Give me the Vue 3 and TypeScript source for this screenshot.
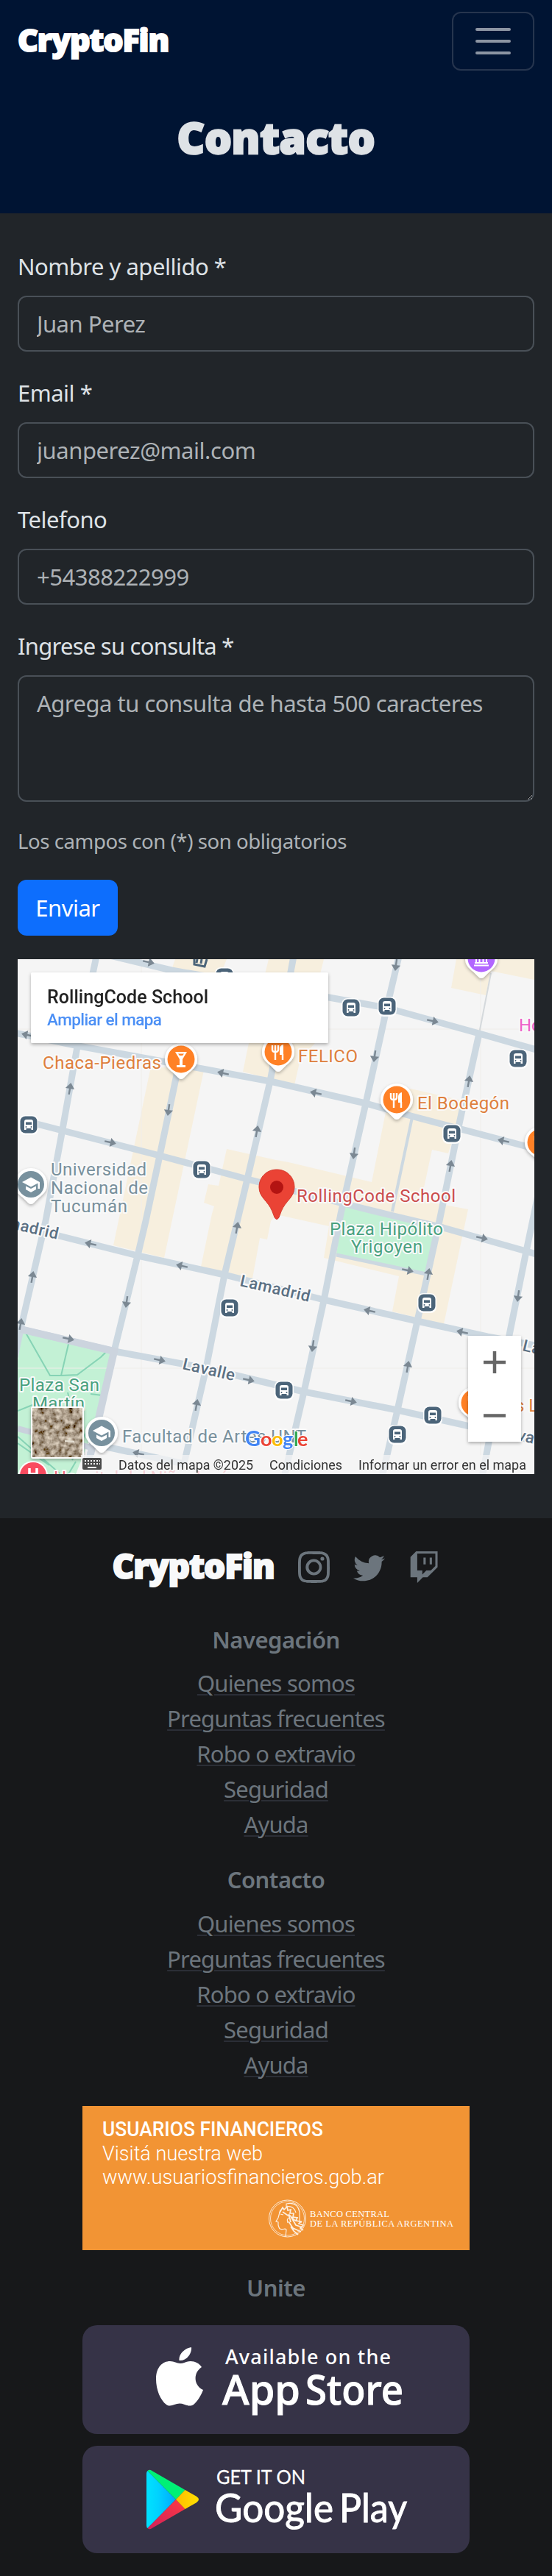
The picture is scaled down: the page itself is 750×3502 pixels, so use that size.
<script setup lang="ts">
interface Field { id: string; label: string; placeholder: string; type: string }
interface Spot { x: number; y: number }
interface Arrow extends Spot { a: number }

const fields: Field[] = [
  { id: 'nombre', label: 'Nombre y apellido *', placeholder: 'Juan Perez', type: 'text' },
  { id: 'email', label: 'Email *', placeholder: 'juanperez@mail.com', type: 'email' },
  { id: 'telefono', label: 'Telefono', placeholder: '+54388222999', type: 'tel' },
]

const links: string[] = ['Quienes somos', 'Preguntas frecuentes', 'Robo o extravio', 'Seguridad', 'Ayuda']
const groups: string[] = ['Navegación', 'Contacto']

const blocks: string[] = [
  '205,160 277,165 223,420 154,403',
  '238,14 308,14 300,34 233,28',
  '365,14 440,14 435,34 360,34',
  '338,128 428,128 408,150 400,185 330,167',
  '308,272 375,287 392,290 505,317 523,227 530,200 558,190 632,207 609,278 587,273 577,320 572,342 636,354 603,510 533,493 542,445 440,420 447,377 375,361 368,370 363,395 353,393 343,448 273,432 288,360 291,350 277,345 283,320 297,322',
  '620,14 726,14 726,42 667,30 660,63 613,53',
]

const roads: string[] = [
  '131,10 105,133 85,245 62,370 28,517 20,555',
  '243,157 217,281 198,370 187,417 155,547 127,667 120,700',
  '399,10 367,180 336,313 305,443 280,570 250,700',
  '542,10 526,78 497,210 463,360 440,478 413,602 386,718',
  '651,115 625,233 597,370 567,506 540,627 519,718',
  '732,330 715,411 692,525 655,718',
  '145,8 233,29 447,66 525,80 651,115 732,138',
  '20,114 107,132 243,157 367,180 497,210 562,228 732,273',
  '50,238 85,247 217,281 336,313 462,345 535,363 602,379 715,411 732,416',
  '24,378 80,390 187,417 305,443 440,477 567,506 662,527 732,540',
  '28,517 155,547 280,570 413,602 540,627 732,670',
  '140,676 250,700',
]

const arrows: Arrow[] = [
  ...[[202, 18], [150, 263], [588, 98], [93, 530], [217, 559], [338, 586], [655, 393], [554, 437], [477, 615]].map(([x, y]) => ({ x, y, a: 12 })),
  ...[[37, 117], [303, 169], [429, 196], [684, 261], [123, 401], [247, 431], [502, 492], [628, 521], [188, 686]].map(([x, y]) => ({ x, y, a: 192 })),
  ...[[95, 190], [349, 248], [637, 180], [612, 295], [322, 379], [44, 446], [28, 510], [267, 620], [582, 442], [554, 568]].map(([x, y]) => ({ x, y, a: -80 })),
  ...[[229, 219], [538, 22], [509, 146], [481, 278], [172, 480], [425, 540], [704, 472]].map(([x, y]) => ({ x, y, a: 98 })),
]

const buses: Spot[] = [
  [39, 239], [274, 300], [477, 80], [526, 78], [704, 149], [614, 251],
  [312, 488], [580, 481], [386, 600], [588, 634], [540, 660], [305, 38],
].map(([x, y]) => ({ x, y }))

const food: Spot[] = [{ x: 378, y: 140 }, { x: 539, y: 205 }, { x: 735, y: 263 }, { x: 645, y: 617 }]
const campus: Spot[] = [{ x: 42, y: 320 }, { x: 138, y: 658 }]
const at = (s: Spot): string => `translate(${s.x} ${s.y})`
</script>

<template>
  <div class="page">
    <header class="hero">
      <nav class="navbar">
        <a class="brand">CryptoFin</a>
        <button class="toggler" type="button" aria-label="Menu">
          <svg viewBox="0 0 30 30" width="60" height="60">
            <path d="M4 7h22M4 15h22M4 23h22" stroke="#fff" stroke-opacity=".55" stroke-width="2" stroke-linecap="round" />
          </svg>
        </button>
      </nav>
      <h1 class="title">Contacto</h1>
    </header>

    <main class="content">
      <form class="form">
        <div v-for="f in fields" :key="f.id" class="field">
          <label :for="f.id">{{ f.label }}</label>
          <input :id="f.id" :type="f.type" :placeholder="f.placeholder" :class="f.id">
        </div>
        <div class="field">
          <label for="consulta" class="tight">Ingrese su consulta *</label>
          <textarea id="consulta" class="consulta" placeholder="Agrega tu consulta de hasta 500 caracteres"></textarea>
        </div>
        <p class="hint">Los campos con (*) son obligatorios</p>
        <button class="send" type="button">Enviar</button>
      </form>

      <svg class="map" viewBox="24 14 702 700" width="702" height="700">
        <defs>
          <filter id="aerial" x="0" y="0" width="100%" height="100%">
            <feTurbulence type="fractalNoise" baseFrequency=".13" numOctaves="3" seed="8" />
            <feColorMatrix values="1.500 .2 0 0 -.27  1.450 .2 0 0 -.31  1.350 .2 0 0 -.34  0 0 0 0 1" />
            <feComponentTransfer>
              <feFuncR type="linear" slope=".8" intercept="-.06" />
              <feFuncG type="linear" slope=".78" intercept="-.07" />
              <feFuncB type="linear" slope=".74" intercept="-.07" />
            </feComponentTransfer>
          </filter>
          <filter id="soft" x="-20%" y="-20%" width="140%" height="150%">
            <feDropShadow dx="0" dy="2" stdDeviation="2" flood-color="#000" flood-opacity=".3" />
          </filter>
          <g id="bus">
            <rect x="-13" y="-13" width="26" height="27" rx="8" fill="#fff" opacity=".9" />
            <rect x="-11.500" y="-11.500" width="23" height="23" rx="7" fill="#4b6479" />
            <path d="M-6 7v-11q0-3 3-3h6q3 0 3 3v11h-2.500v-2h-7v2z" fill="#fff" />
            <path d="M-4-3.500h8v3.500h-8z" fill="#4b6479" />
            <circle cx="-3.500" cy="3" r="1" fill="#4b6479" /><circle cx="3.500" cy="3" r="1" fill="#4b6479" />
          </g>
          <path id="drop" d="M0-22a22 22 0 0 1 22 22c0 9-5 13-11 18l-7 7q-4 4-8 0l-7-7c-6-5-11-9-11-18a22 22 0 0 1 22-22z" />
          <path id="arrow" d="M-8-1.200h8v-5l8 6.200-8 6.200v-5h-8z" />
        </defs>

        <rect x="24" y="14" width="702" height="700" fill="#f5f5f5" />
        <polygon v-for="b in blocks" :key="b" :points="b" fill="#f7efde" />
        <polygon points="467,350 592,378 578,440 457,415" fill="#c3f1d5" />
        <polygon points="30,521 152,548 128,650 103,714 24,714 24,560" fill="#c3f1d5" />
        <path d="M192 14v700M653 14v700M24 570h702M24 109h702" stroke="#efedea" fill="none" />
        <path d="M35 522l33 58h15l11-47M83 580l22-1 32-24 9-9M24 628l20-8M123 605l16 2M24 663l57 50M24 672l43 30M103 697l-10 17M92 603l3 12M118 655l-20 40" stroke="#86d3b5" stroke-width="2" fill="none" />
        <path d="M24 652l100 26" stroke="#c9d1dc" stroke-width="8" />
        <path d="M667 33l-16 82" stroke="#d5d9dc" stroke-width="2" />
        <path d="M560 229l-27 128" stroke="#ccd8e1" stroke-width="4" />
        <path d="M457 416l122 26" stroke="#ccd8e1" stroke-width="5" />
        <polyline v-for="r in roads" :key="r" :points="r" fill="none" stroke="#ccd8e1" stroke-width="9" stroke-linejoin="round" />
        <path d="M28 517l127 30-32 140" stroke="#ccd4de" stroke-width="10" fill="none" />
        <use v-for="(r, i) in arrows" :key="i" href="#arrow" :transform="`translate(${r.x} ${r.y}) rotate(${r.a})`" fill="#7b8893" />
        <path d="M264 14v7l14 3 3-10M268 14l-1 5M274 14l-1 6" stroke="#4b6479" stroke-width="3" fill="none" />
        <use v-for="(b, i) in buses" :key="i" href="#bus" :transform="at(b)" />

        <g class="poi">
          <g class="road-name">
            <text transform="translate(325 458) rotate(13)" textLength="97">Lamadrid</text>
            <text transform="translate(-17 373) rotate(13)" textLength="97">Lamadrid</text>
            <text transform="translate(247 571) rotate(13)" textLength="72">Lavalle</text>
            <text transform="translate(709 546) rotate(13)" textLength="97">Lamadrid</text>
            <text transform="translate(678 662) rotate(13)" textLength="72">Lavalle</text>
          </g>
          <g fill="#de7f3d">
            <text x="58" y="163" textLength="161">Chaca-Piedras</text>
            <text x="405" y="154" textLength="81">FELICO</text>
            <text x="567" y="218" textLength="125">El Bodegón</text>
            <text x="700" y="629">s Lomitas</text>
          </g>
          <text x="705" y="112" fill="#ee60c8">Hotel</text>
          <g fill="#78909c">
            <text x="69" y="308" textLength="130">Universidad</text>
            <text x="69" y="333" textLength="132">Nacional de</text>
            <text x="69" y="358" textLength="104">Tucumán</text>
            <text x="166" y="671" textLength="250">Facultad de Artes UNT</text>
          </g>
          <g fill="#48a17f">
            <text x="448" y="389" textLength="154">Plaza Hipólito</text>
            <text x="477" y="413" textLength="97">Yrigoyen</text>
            <text x="26" y="601" textLength="109">Plaza San</text>
            <text x="44" y="626" textLength="71">Martín</text>
          </g>
          <text x="403" y="344" textLength="216" fill="#cb4d4d">RollingCode School</text>
          <text x="73" y="727" textLength="250" fill="#ee6b7b">Hospital del Niño Jesús</text>
        </g>

        <g filter="url(#soft)">
          <use href="#drop" transform="translate(246 150)" fill="#fff" />
          <use v-for="(f, i) in food" :key="i" href="#drop" :transform="at(f)" fill="#fff" />
          <use v-for="(c, i) in campus" :key="'c' + i" href="#drop" :transform="at(c)" fill="#fff" />
          <use href="#drop" transform="translate(654 13)" fill="#fff" />
        </g>
        <g transform="translate(246 150)">
          <circle r="18.500" fill="#ff8126" />
          <path d="M-8-10h16L2 0v8h4v3H-6V8h4V0zM-4-7.500h8l-2 2.500h-4z" fill="#fff" fill-rule="evenodd" />
        </g>
        <g v-for="(f, i) in food" :key="'f' + i" :transform="at(f)">
          <circle r="18.500" fill="#ff8126" />
          <path d="M-8-9v6q0 3 4 3v11M0-9v6q0 3-4 3M-4-9v9M6 11v-8" fill="none" stroke="#fff" stroke-width="2.400" />
          <path d="M7-10v14H2V-4q0-5 5-6z" fill="#fff" />
        </g>
        <g v-for="(c, i) in campus" :key="'g' + i" :transform="at(c)">
          <circle r="18" fill="#78919e" />
          <path d="M-12-3 0-9.500 12-3v9h-2.500v-7.500L0 3.500zM-7 2.500 0 6l7-3.500v4.500L0 11-7 7z" fill="#fff" />
        </g>
        <g transform="translate(654 13)">
          <circle r="18.500" fill="#b266ff" />
          <path d="M-10 9.500h20M-9 6h18M-7-5V6M-2.500-5V6M2.500-5V6M7-5V6" stroke="#fff" stroke-width="2" />
        </g>
        <g transform="translate(45 716)">
          <circle r="20" fill="#fff" /><circle r="18" fill="#f94b5f" />
          <path d="M-5-10V8M5-10V8M-5-2H5" stroke="#fff" stroke-width="3.500" />
        </g>
        <path d="M376 300c14 0 24 10.500 24 24 0 14-12 18-18 33l-3 8q-3 5-6 0l-3-8c-6-15-18-19-18-33C352 310.500 362 300 376 300z" fill="#ea4335" stroke="#d23a2e" />
        <circle cx="376" cy="324" r="9" fill="#b31412" />

        <g filter="url(#soft)"><rect x="42" y="32" width="404" height="96" rx="2" fill="#fff" /></g>
        <g font-family="Roboto, sans-serif" font-weight="500">
          <text x="64" y="74" font-size="25" textLength="219" fill="#222">RollingCode School</text>
          <text x="64" y="104" font-size="22.500" textLength="156" fill="#4b8ff5">Ampliar el mapa</text>
        </g>
        <g filter="url(#soft)"><rect x="636" y="526" width="72" height="144" fill="#fff" /></g>
        <path d="M657 562h30M672 547v30M657 634.500h30" stroke="#666" stroke-width="4.500" />
        <g filter="url(#soft)"><rect x="42" y="622" width="72" height="71" rx="3" fill="#fff" /></g>
        <rect x="44" y="624" width="68" height="67" filter="url(#aerial)" />
        <path d="M88 669l13 1" stroke="#e3ddd0" stroke-width="2.500" />

        <g class="google">
          <text y="676"><tspan x="333" fill="#4285f4" font-size="29">G</tspan><tspan x="354" fill="#ea4335">o</tspan><tspan x="369" fill="#fbbc04">o</tspan><tspan x="384" fill="#4285f4">g</tspan><tspan x="399" fill="#34a853">l</tspan><tspan x="404" fill="#ea4335">e</tspan></text>
        </g>
        <rect x="110" y="688" width="616" height="26" fill="#f5f5f5" opacity=".72" />
        <rect x="112" y="692" width="26" height="16" rx="2" fill="#4a4a4a" />
        <path d="M115 696h21M115 700h21" stroke="#f5f5f5" stroke-width="2" stroke-dasharray="2 2" />
        <path d="M119 705h12" stroke="#f5f5f5" stroke-width="2" />
        <g class="legal">
          <text x="161" y="708" textLength="183" lengthAdjust="spacingAndGlyphs">Datos del mapa ©2025</text>
          <text x="366" y="708" textLength="99" lengthAdjust="spacingAndGlyphs">Condiciones</text>
          <text x="487" y="708" textLength="228" lengthAdjust="spacingAndGlyphs">Informar un error en el mapa</text>
        </g>
      </svg>
    </main>

    <footer class="footer">
      <div class="social">
        <span class="brand small">CryptoFin</span>
        <svg width="43" height="43" viewBox="0 0 16 16" fill="currentColor"><path d="M8 0C5.829 0 5.556.01 4.703.048 3.850.088 3.269.222 2.760.420a3.900 3.900 0 0 0-1.417.923A3.900 3.900 0 0 0 .420 2.760C.222 3.268.087 3.850.048 4.700.010 5.555 0 5.827 0 8.001c0 2.172.010 2.444.048 3.297.040.852.174 1.433.372 1.942.205.526.478.972.923 1.417.444.445.890.719 1.416.923.510.198 1.090.333 1.942.372C5.555 15.990 5.827 16 8 16s2.444-.010 3.298-.048c.851-.040 1.434-.174 1.943-.372a3.900 3.900 0 0 0 1.416-.923c.445-.445.718-.891.923-1.417.197-.509.332-1.090.372-1.942C15.990 10.445 16 10.173 16 8s-.010-2.445-.048-3.299c-.040-.851-.175-1.433-.372-1.941a3.900 3.900 0 0 0-.923-1.417A3.900 3.900 0 0 0 13.240.420c-.510-.198-1.092-.333-1.943-.372C10.443.010 10.172 0 7.998 0zm-.717 1.442h.718c2.136 0 2.389.007 3.232.046.780.035 1.204.166 1.486.275.373.145.640.319.920.599s.453.546.598.920c.110.281.240.705.275 1.485.039.843.047 1.096.047 3.231s-.008 2.389-.047 3.232c-.035.780-.166 1.203-.275 1.485a2.500 2.500 0 0 1-.599.919c-.280.280-.546.453-.920.598-.280.110-.704.240-1.485.276-.843.038-1.096.047-3.232.047s-2.390-.009-3.233-.047c-.780-.036-1.203-.166-1.485-.276a2.500 2.500 0 0 1-.920-.598 2.500 2.500 0 0 1-.600-.920c-.109-.281-.240-.705-.275-1.485-.038-.843-.046-1.096-.046-3.233s.008-2.388.046-3.231c.036-.780.166-1.204.276-1.486.145-.373.319-.640.599-.920s.546-.453.920-.598c.282-.110.705-.240 1.485-.276.738-.034 1.024-.044 2.515-.045zm4.988 1.328a.960.960 0 1 0 0 1.920.960.960 0 0 0 0-1.920m-4.270 1.122a4.109 4.109 0 1 0 0 8.217 4.109 4.109 0 0 0 0-8.217m0 1.441a2.667 2.667 0 1 1 0 5.334 2.667 2.667 0 0 1 0-5.334" /></svg>
        <svg width="43" height="43" viewBox="0 0 16 16" fill="currentColor"><path d="M5.026 15c6.038 0 9.341-5.003 9.341-9.334q.002-.211-.006-.422A6.700 6.700 0 0 0 16 3.542a6.700 6.700 0 0 1-1.889.518 3.300 3.300 0 0 0 1.447-1.817 6.500 6.500 0 0 1-2.087.793A3.286 3.286 0 0 0 7.875 6.030a9.320 9.320 0 0 1-6.767-3.429 3.290 3.290 0 0 0 1.018 4.382A3.300 3.300 0 0 1 .640 6.575v.045a3.290 3.290 0 0 0 2.632 3.218 3.200 3.200 0 0 1-.865.115 3 3 0 0 1-.614-.057 3.280 3.280 0 0 0 3.067 2.277A6.600 6.600 0 0 1 .780 13.580a6 6 0 0 1-.780-.045A9.340 9.340 0 0 0 5.026 15" /></svg>
        <svg width="43" height="43" viewBox="0 0 16 16" fill="currentColor"><path d="M3.857 0 1 2.857v10.286h3.429V16l2.857-2.857H9.570L14.714 8V0zm9.714 7.429-2.285 2.285H9l-2 2v-2H4.429V1.143h9.142z" /><path d="M11.857 3.143h-1.143V6.570h1.143zm-3.143 0H7.571V6.570h1.143z" /></svg>
      </div>

      <section v-for="g in groups" :key="g" class="group">
        <h5>{{ g }}</h5>
        <ul>
          <li v-for="l in links" :key="l"><a>{{ l }}</a></li>
        </ul>
      </section>

      <svg class="banner" viewBox="0 0 526 196" width="526" height="196" fill="#fff">
        <rect width="526" height="196" fill="#f29434" />
        <g font-family="Roboto, sans-serif" font-size="28">
          <text x="27" y="40.500" font-weight="500" textLength="300" lengthAdjust="spacingAndGlyphs">USUARIOS FINANCIEROS</text>
          <text x="27" y="73.500" font-weight="300" textLength="218" lengthAdjust="spacingAndGlyphs">Visitá nuestra web</text>
          <text x="27" y="106" font-weight="300" textLength="383" lengthAdjust="spacingAndGlyphs">www.usuariosfinancieros.gob.ar</text>
        </g>
        <g fill="none" stroke="#fff" opacity=".85">
          <circle cx="278.500" cy="153" r="25" stroke-width="1" /><circle cx="278.500" cy="153" r="23" stroke-width=".8" />
          <path d="M269 141l-3 11-3 5 3 1v4l1 3q1 4 8 2l2 1-1 10M277 137v-4q15-3 18 11v12M277 137q10-2 13 8M269 147l4 1M281 152q-4 1-2 7" stroke-width="1.200" />
          <path d="M268 145l4-7 2 3 4-4 1 5 4-1-1 5 5 0-1 5 6 1-2 4 7 1-3 3 6 2-4 4 4 3M283 150l7 12 9 3M280 157l6 9 11 5M283 164l4 6 6 5M280 147l8 8 10 3M272 144l9 6 2 8" stroke-width="1.700" />
        </g>
        <g font-family="'Liberation Serif', serif" font-size="12.500">
          <text x="309" y="150.700" textLength="108">BANCO CENTRAL</text>
          <text x="309" y="164" textLength="195">DE LA REPÚBLICA ARGENTINA</text>
        </g>
      </svg>

      <h5 class="join">Unite</h5>

      <div class="stores">
        <svg viewBox="0 0 526 148" width="526" height="148" fill="#fff">
          <rect width="526" height="148" rx="20" fill="#363347" />
          <path d="M148 30c1 9-7 19-16.500 18-1-9 8-17 16.500-18zM162 57c-12 8-11 25 2 31-3 8-8 16-13 20-7 4-12-1.500-19-1.500s-12 5.500-18 1.500c-8-6-14-20-14-35 0-16 9-24 19-24 6 0 9 3 14 3s8-3 14-3c6 0 12 3 15 8z" />
          <g font-family="'Noto Sans', sans-serif" font-weight="500">
            <text x="194" y="53" font-size="27" textLength="225">Available on the</text>
            <g font-size="56" stroke="#fff" stroke-width="1">
              <text x="190" y="107.500" textLength="106" lengthAdjust="spacingAndGlyphs">App</text>
              <text x="303" y="107.500" textLength="133" lengthAdjust="spacingAndGlyphs">Store</text>
            </g>
          </g>
        </svg>
        <svg viewBox="0 0 526 146" width="526" height="146" fill="#fff">
          <defs>
            <linearGradient id="playBlue"><stop offset="0" stop-color="#00e2ff" /><stop offset=".4" stop-color="#00d2ff" /><stop offset="1" stop-color="#00a8ff" /></linearGradient>
            <linearGradient id="playRed" x1="1" y1="0" x2="0" y2="1"><stop offset="0" stop-color="#ff3a44" /><stop offset="1" stop-color="#d0205a" /></linearGradient>
            <linearGradient id="playYellow"><stop offset="0" stop-color="#ffbc00" /><stop offset="1" stop-color="#ffe000" /></linearGradient>
          </defs>
          <rect width="526" height="146" rx="20" fill="#363347" />
          <path d="M88.500 34q-1.500 1-1.500 4v70q0 3 1.500 4L127 73z" fill="url(#playBlue)" />
          <path d="M88.500 34q2.500-2.500 6 0L139.500 60 127 73z" fill="#00f076" />
          <path d="M88.500 112q2.500 2.500 6 0L139.500 86 127 73z" fill="url(#playRed)" />
          <path d="M139.500 60l15 8.500q7 4.500 0 9l-15 8.500L127 73z" fill="url(#playYellow)" />
          <g font-family="Lato, sans-serif">
            <text x="182" y="52" font-size="27.500" textLength="121" lengthAdjust="spacingAndGlyphs" stroke="#fff" stroke-width=".3">GET IT ON</text>
            <g font-size="54" stroke="#fff" stroke-width="1">
              <text x="180" y="104" textLength="161" lengthAdjust="spacingAndGlyphs">Google</text>
              <text x="349" y="104" textLength="92" lengthAdjust="spacingAndGlyphs">Play</text>
            </g>
          </g>
        </svg>
      </div>
    </footer>
  </div>
</template>

<style>
body { margin: 0; background: #212529; }
</style>

<style scoped>
.page { width: 750px; background: #212529; color: #dee2e6; font: 400 31px/48px 'Noto Sans', 'Open Sans', sans-serif; letter-spacing: -0.5px; }
* { box-sizing: border-box; }
h1, h5, p, ul { margin: 0; padding: 0; }
svg { display: block; }

.hero { height: 290px; background: #001433; }
.navbar { display: flex; justify-content: space-between; align-items: center; height: 112px; padding: 0 24px; }
.brand { color: #fff; font: 800 43px/60px 'Open Sans', sans-serif; letter-spacing: -1.1px; -webkit-text-stroke: 2px #fff; padding-bottom: 4px; }
.toggler { width: 112px; height: 80px; padding: 0; display: grid; place-items: center; background: none; border: 2px solid #26354e; border-radius: 12px; }
.title { text-align: center; font: 800 58px/70px 'Open Sans', sans-serif; letter-spacing: -0.3px; padding-top: 40px; -webkit-text-stroke: 2.500px #dee2e6; }

.content { height: 1774px; padding: 48px 24px 0; }
.field { display: flex; flex-direction: column; gap: 16px; margin-bottom: 32px; }
label { height: 48px; }
.tight { letter-spacing: -0.75px; }
input, textarea { width: 702px; height: 76px; margin: 0; padding: 12px 24px; border: 2px solid #495057; border-radius: 12px; background: #212529; color: #dee2e6; font: inherit; letter-spacing: inherit; outline: 0; }
textarea { height: 172px; display: block; }
::placeholder { color: rgba(222, 226, 230, .75); opacity: 1; }
.email { letter-spacing: -0.45px; }
.hint { font-size: 27.600px; line-height: 42px; color: rgba(222, 226, 230, .75); letter-spacing: -0.45px; }
.send { width: 136px; height: 76px; margin-top: 32px; padding: 0; border: 0; border-radius: 12px; background: #0d6efd; color: #fff; font: inherit; letter-spacing: inherit; display: block; }

.map { margin-top: 32px; }
.poi { font: 400 24px Roboto, sans-serif; stroke: #fafafa; stroke-width: 4px; stroke-linejoin: round; }
.poi text { paint-order: stroke; }
.road-name { fill: #5b7083; font-size: 22px; font-weight: 500; }
.google { font: 700 27px Lato, sans-serif; stroke: #fff; stroke-width: 2px; }
.google text { paint-order: stroke; }
.legal { font: 400 19px Roboto, sans-serif; fill: #333; }

.footer { height: 1438px; padding-top: 32px; background: #17181a; color: #6c757d; display: flex; flex-direction: column; align-items: center; }
.social { display: flex; gap: 32px; height: 114px; padding-top: 13px; align-items: flex-start; }
.small { font-size: 46px; line-height: 64px; margin-top: -13px; color: #f8f9fa; -webkit-text-stroke: 2px #f8f9fa; }
h5 { font-size: 31px; line-height: 38.400px; font-weight: 600; text-align: center; margin-bottom: 16px; }
.group { margin-bottom: 32px; }
ul { list-style: none; text-align: center; letter-spacing: -0.8px; }
li { height: 48px; }
li a { text-decoration: underline 2px #2b2e36; text-underline-offset: 3px; }
.join { margin: 32px 0; }
.stores { display: grid; gap: 16px; }
svg text { letter-spacing: 0; }
</style>
